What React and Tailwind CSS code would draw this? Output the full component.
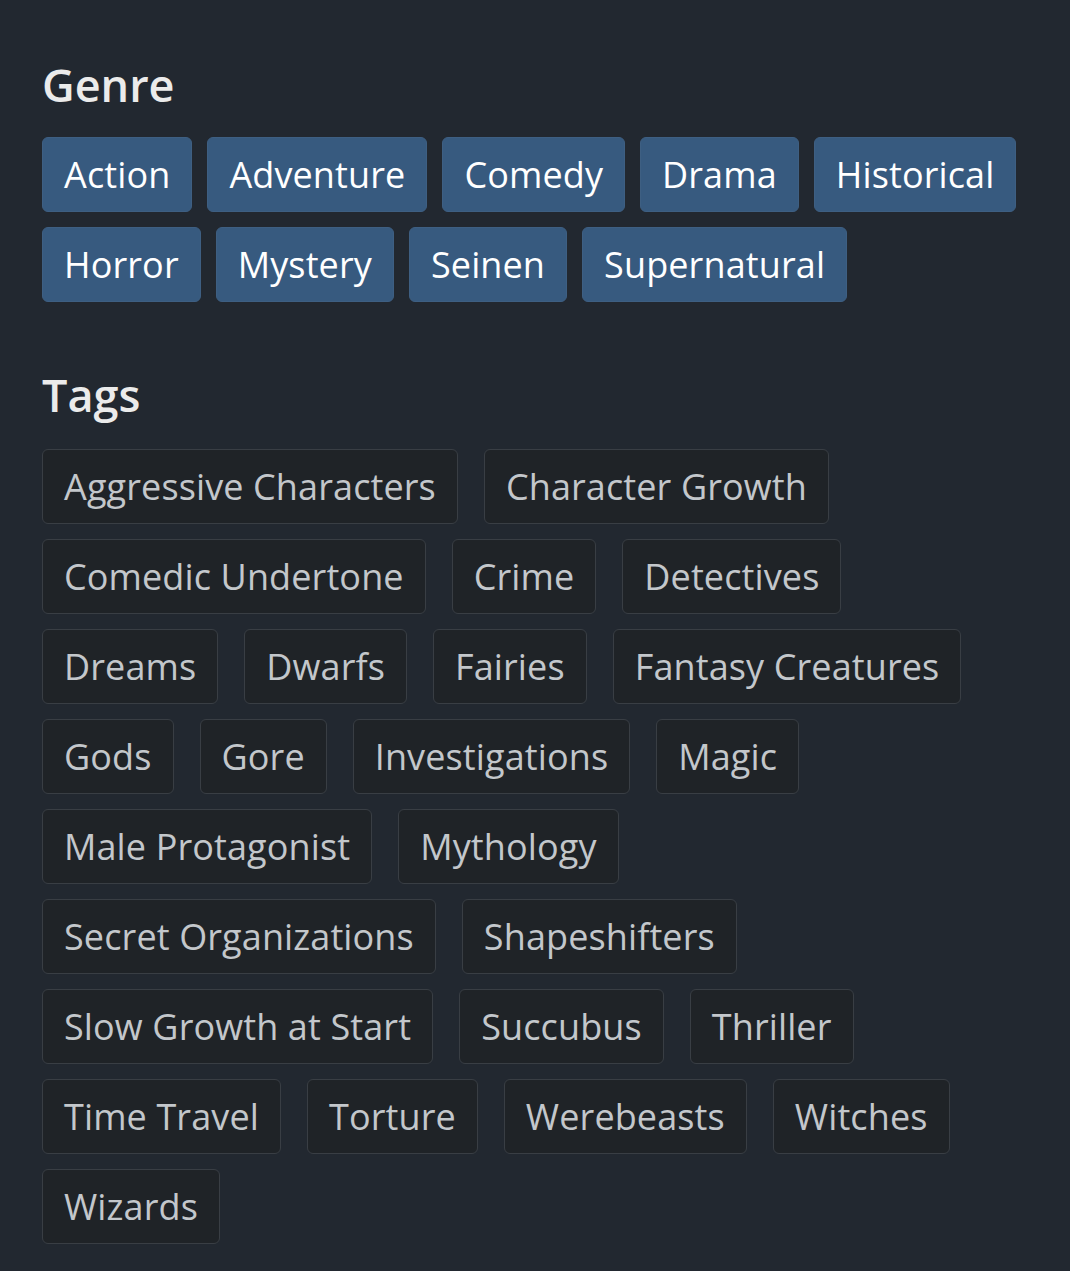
import React from "react";

const genres = ["Action", "Adventure", "Comedy", "Drama", "Historical", "Horror", "Mystery", "Seinen", "Supernatural"];
const tags = [
  "Aggressive Characters", "Character Growth", "Comedic Undertone", "Crime", "Detectives",
  "Dreams", "Dwarfs", "Fairies", "Fantasy Creatures", "Gods", "Gore", "Investigations", "Magic",
  "Male Protagonist", "Mythology", "Secret Organizations", "Shapeshifters", "Slow Growth at Start",
  "Succubus", "Thriller", "Time Travel", "Torture", "Werebeasts", "Witches", "Wizards",
];

export default function App() {
  return (
    <div
      className="min-h-[1271px] w-full bg-[#222830] px-[42px] pt-[58px] pb-[20px]"
      style={{ fontFamily: '"Open Sans", "Noto Sans", sans-serif' }}
    >
      <h2 className="text-[45px] font-semibold leading-[1.2] text-[#ebebeb]">Genre</h2>
      <div className="mt-[25px] flex flex-wrap gap-[15px]">
        {genres.map((g) => (
          <span
            key={g}
            className="rounded-[6px] border border-[#3e5f82] bg-[#375a7f] px-[21px] py-[10px] text-[36px] leading-[53px] tracking-[0.12px] text-white"
          >
            {g}
          </span>
        ))}
      </div>
      <h2 className="mt-[66px] text-[45px] font-semibold leading-[1.2] text-[#ebebeb]">Tags</h2>
      <div className="mt-[27px] flex flex-wrap gap-x-[26px] gap-y-[15px]">
        {tags.map((t) => (
          <span
            key={t}
            className="rounded-[6px] border border-[#393e44] bg-[#1f2327] px-[21px] py-[10px] text-[36px] leading-[53px] tracking-[0.12px] text-[#c3c7cb]"
          >
            {t}
          </span>
        ))}
      </div>
    </div>
  );
}
